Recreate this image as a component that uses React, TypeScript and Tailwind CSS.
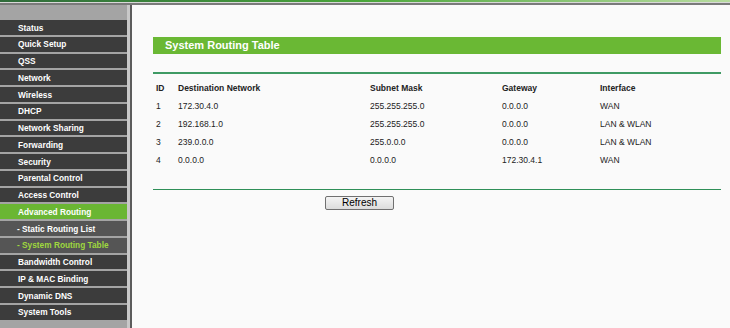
const menu = [
  { label: "Status" },
  { label: "Quick Setup" },
  { label: "QSS" },
  { label: "Network" },
  { label: "Wireless" },
  { label: "DHCP" },
  { label: "Network Sharing" },
  { label: "Forwarding" },
  { label: "Security" },
  { label: "Parental Control" },
  { label: "Access Control" },
  { label: "Advanced Routing", active: true },
  { label: "- Static Routing List", sub: true },
  { label: "- System Routing Table", sub: true, current: true },
  { label: "Bandwidth Control" },
  { label: "IP & MAC Binding" },
  { label: "Dynamic DNS" },
  { label: "System Tools" },
];

const routes = [
  ["1", "172.30.4.0", "255.255.255.0", "0.0.0.0", "WAN"],
  ["2", "192.168.1.0", "255.255.255.0", "0.0.0.0", "LAN & WLAN"],
  ["3", "239.0.0.0", "255.0.0.0", "0.0.0.0", "LAN & WLAN"],
  ["4", "0.0.0.0", "0.0.0.0", "172.30.4.1", "WAN"],
];

const Sidebar = () => {
  return (
    <div className="flex w-[132px] shrink-0 bg-[#a4a4a4]">
      <div className="flex w-[127px] flex-col gap-[2px] pt-[15px]">
        {menu.map((item) => (
          <div
            key={item.label}
            className={
              "flex h-[14.75px] items-center whitespace-nowrap pt-[1px] text-[8.3px] font-bold leading-none " +
              (item.active
                ? "bg-[#6ab633] pl-[18px] text-white"
                : item.sub
                  ? "bg-[#555555] pl-[17px] " +
                    (item.current ? "text-[#9fd83e]" : "text-white")
                  : "bg-[#3c3c3c] pl-[18px] text-white")
            }
          >
            {item.label}
          </div>
        ))}
      </div>
      <div className="w-[3px] bg-[#c8c8c8]" />
      <div className="w-[2px] bg-[#5c5c5c]" />
    </div>
  );
};

const App = () => {
  return (
    <div
      className="flex h-[328px] w-[730px] flex-col overflow-hidden bg-[#fafafa]"
      style={{ fontFamily: '"Liberation Sans", Arial, sans-serif' }}
    >
      <div className="h-[2px] bg-gradient-to-r from-[#2f6b3a] via-[#4aa63a] to-[#b8dca0]" />
      <div className="h-[1px] bg-[#d8d8d8]" />
      <div className="h-[2px] bg-[#7a7a7a]" />
      <div className="flex flex-1">
        <Sidebar />
        <div className="flex-1 pl-[21px] pr-[9px] pt-[32px]">
          <div className="flex h-[17px] items-center bg-[#6ab834] pl-[12px] text-[11px] font-bold text-white">
            System Routing Table
          </div>
          <div className="mt-[18px] h-[2px] bg-[#3f9a64]" />
          <table className="mt-[5px] w-full text-[8.5px] text-[#222]">
            <thead>
              <tr className="h-[18px] text-left font-bold">
                <th className="w-[25px] pl-[3px]">ID</th>
                <th className="w-[192px]">Destination Network</th>
                <th className="w-[132px]">Subnet Mask</th>
                <th className="w-[98px]">Gateway</th>
                <th>Interface</th>
              </tr>
            </thead>
            <tbody>
              {routes.map((r) => (
                <tr key={r[0]} className="h-[18px]">
                  <td className="pl-[3px]">{r[0]}</td>
                  <td>{r[1]}</td>
                  <td>{r[2]}</td>
                  <td>{r[3]}</td>
                  <td>{r[4]}</td>
                </tr>
              ))}
            </tbody>
          </table>
          <div className="mt-[20px] border-t border-[#2f8f58]" />
          <div className="mt-[6px] flex pl-[172px]">
            <button className="h-[14px] w-[69px] rounded-[2px] border border-[#707070] bg-gradient-to-b from-[#f4f4f4] to-[#dcdcdc] text-[10px] leading-none text-black">
              Refresh
            </button>
          </div>
        </div>
      </div>
    </div>
  );
};

export default App;
